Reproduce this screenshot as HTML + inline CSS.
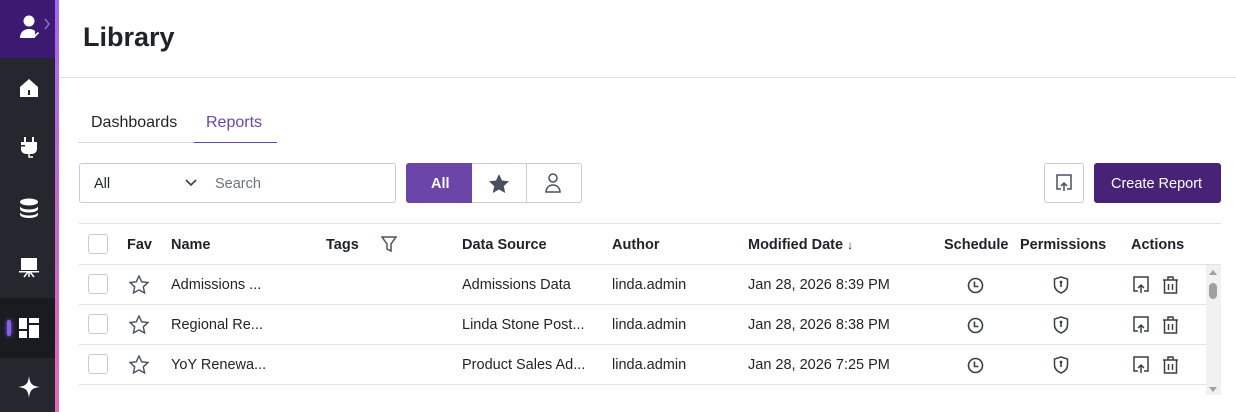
<!DOCTYPE html>
<html><head><style>
*{box-sizing:border-box;margin:0;padding:0}
body{width:1236px;height:412px;overflow:hidden;background:#fff;font-family:"Liberation Sans",sans-serif;position:relative;color:#1f2228}
.a{position:absolute}
.side{left:0;top:0;width:55px;height:412px;background:#25262e}
.stripe{left:55px;top:0;width:4px;height:412px;background:linear-gradient(#a468f0,#e766b8)}
.t{font-size:14.5px;white-space:nowrap}
.h{font-size:14.5px;font-weight:bold;white-space:nowrap}
.cb{width:20px;height:20px;border:1px solid #c9ccd3;border-radius:3px;background:#fff}
.line{height:1px;background:#e1e2e8}
</style></head><body>
<div class="a side"></div>
<div class="a" style="left:0;top:0;width:55px;height:58px;background:#3d1a72"></div>
<div class="a" style="left:0;top:298px;width:55px;height:60px;background:#1a1b20"></div>
<div class="a stripe"></div>
<svg class="a" style="left:18px;top:14px" width="36" height="26" viewBox="0 0 36 26"><circle cx="11" cy="7" r="5.5" fill="#fff"/><path d="M2 24c0-6 4-9 9-9 3 0 5 1 6 2v7z" fill="#fff"/><path d="M14 20l2.5 2.5 4-4" stroke="#fff" stroke-width="1.6" fill="none"/><path d="M27 5l4 5-4 5" stroke="#8b6fb5" stroke-width="1.5" fill="none"/></svg>
<svg class="a" style="left:19px;top:78px" width="20" height="20" viewBox="0 0 20 20"><path d="M1 9L10 1l9 8v10H1z" fill="#fff"/><rect x="9" y="12" width="2" height="5" fill="#25262e"/></svg>
<svg class="a" style="left:20px;top:137px" width="18" height="22" viewBox="0 0 18 22"><rect x="4" y="0" width="2" height="5" fill="#fff"/><rect x="12" y="0" width="2" height="5" fill="#fff"/><path d="M1 5h16v7a5 5 0 0 1-5 5H6a5 5 0 0 1-5-5z" fill="#fff"/><path d="M9 17v3h4" stroke="#fff" stroke-width="1.5" fill="none"/><rect x="0" y="8" width="5" height="1.5" fill="#25262e"/></svg>
<svg class="a" style="left:19px;top:198px" width="20" height="20" viewBox="0 0 20 20"><ellipse cx="10" cy="4" rx="9" ry="3.5" fill="#fff"/><path d="M1 8c0 2 4 3.5 9 3.5s9-1.5 9-3.5v3c0 2-4 3.5-9 3.5S1 13 1 11z" fill="#fff"/><path d="M1 14c0 2 4 3.5 9 3.5s9-1.5 9-3.5v2.5c0 2-4 3.5-9 3.5s-9-1.5-9-3.5z" fill="#fff"/></svg>
<svg class="a" style="left:19px;top:258px" width="20" height="20" viewBox="0 0 20 20"><rect x="2" y="0" width="16" height="12" fill="#fff"/><rect x="0" y="13" width="20" height="1.5" fill="#fff"/><path d="M5 19l4-5M15 19l-4-5M10 14v5" stroke="#fff" stroke-width="1.5"/></svg>
<div class="a" style="left:7px;top:320px;width:4px;height:16px;background:#8a5cf0;border-radius:2px;box-shadow:0 0 4px #8a5cf0"></div>
<svg class="a" style="left:19px;top:318px" width="20" height="20" viewBox="0 0 20 20"><rect x="0" y="0" width="8" height="11" fill="#fff"/><rect x="10" y="0" width="10" height="5" fill="#fff"/><rect x="0" y="13" width="8" height="7" fill="#fff"/><rect x="10" y="7" width="10" height="13" fill="#fff"/></svg>
<svg class="a" style="left:18px;top:376px" width="22" height="22" viewBox="0 0 22 22"><path d="M11 0C12 8 14 10 22 11 14 12 12 14 11 22 10 14 8 12 0 11 8 10 10 8 11 0z" fill="#fff"/></svg>
<div class="a" style="left:83px;top:22px;font-size:27px;font-weight:bold;color:#1f2228">Library</div>
<div class="a line" style="left:59px;top:77px;width:1177px"></div>
<div class="a t" style="left:91px;top:114px;font-size:16px">Dashboards</div>
<div class="a t" style="left:206px;top:114px;font-size:16px;color:#6b46a8">Reports</div>
<div class="a" style="left:78px;top:142px;width:116px;height:1px;background:#d5d6dc"></div>
<div class="a" style="left:194px;top:142px;width:83px;height:1px;background:#6b46a8"></div>
<div class="a" style="left:79px;top:163px;width:317px;height:40px;border:1px solid #c9ccd3;border-radius:3px"></div>
<div class="a t" style="left:94px;top:176px">All</div>
<svg class="a" style="left:184px;top:178px" width="14" height="10" viewBox="0 0 14 10"><path d="M2 2l5 5 5-5" stroke="#3a3f4a" stroke-width="1.6" fill="none"/></svg>
<div class="a t" style="left:215px;top:176px;color:#6b7280">Search</div>
<div class="a" style="left:406px;top:163px;width:176px;height:40px;border:1px solid #c9ccd3;border-radius:3px"></div>
<div class="a" style="left:406px;top:163px;width:66px;height:40px;background:#6b46a8;border-radius:3px 0 0 3px"></div>
<div class="a t" style="left:431px;top:176px;color:#fff;font-weight:bold">All</div>
<div class="a" style="left:526px;top:164px;width:1px;height:38px;background:#c9ccd3"></div>
<svg class="a" style="left:489px;top:174px" width="20" height="19" viewBox="0 0 20 19"><path d="M10 0l3 6.5 7 .8-5.2 4.8 1.4 6.9L10 15.5 3.8 19l1.4-6.9L0 7.3l7-.8z" fill="#4a5060"/></svg>
<svg class="a" style="left:545px;top:173px" width="16" height="20" viewBox="0 0 16 20"><circle cx="8" cy="5" r="4" stroke="#4a5060" stroke-width="1.5" fill="none"/><path d="M1 19c0-4 3-7 7-7s7 3 7 7z" stroke="#4a5060" stroke-width="1.5" fill="none"/></svg>
<div class="a" style="left:1044px;top:163px;width:40px;height:40px;border:1px solid #c9ccd3;border-radius:3px"></div>
<svg class="a" style="left:1056px;top:174px" width="16" height="18" viewBox="0 0 16 18"><path d="M5 15H1V1h14v14h-4" stroke="#4a5060" stroke-width="1.5" fill="none"/><path d="M8 17V9M5 12l3-3 3 3" stroke="#4a5060" stroke-width="1.5" fill="none"/></svg>
<div class="a" style="left:1094px;top:163px;width:127px;height:40px;background:#472276;border-radius:3px"></div>
<div class="a t" style="left:1111px;top:176px;color:#fff">Create Report</div>
<div class="a line" style="left:79px;top:223px;width:1142px"></div>
<div class="a line" style="left:79px;top:264px;width:1142px"></div>
<div class="a line" style="left:79px;top:304px;width:1127px"></div>
<div class="a line" style="left:79px;top:344px;width:1127px"></div>
<div class="a line" style="left:79px;top:384px;width:1127px"></div>
<div class="a cb" style="left:88px;top:234px"></div>
<div class="a h" style="left:127px;top:237px">Fav</div>
<div class="a h" style="left:171px;top:237px">Name</div>
<div class="a h" style="left:326px;top:237px">Tags</div>
<svg class="a" style="left:381px;top:236px" width="16" height="17" viewBox="0 0 16 17"><path d="M1 1h14l-5 7v7l-4-2V8z" stroke="#4a5060" stroke-width="1.5" fill="none"/></svg>
<div class="a h" style="left:462px;top:237px">Data Source</div>
<div class="a h" style="left:612px;top:237px">Author</div>
<div class="a h" style="left:748px;top:237px">Modified Date <span style="font-weight:normal;font-size:12px">↓</span></div>
<div class="a h" style="left:944px;top:237px">Schedule</div>
<div class="a h" style="left:1020px;top:237px">Permissions</div>
<div class="a h" style="left:1131px;top:237px">Actions</div>
<div class="a" style="left:1206px;top:265px;width:15px;height:130px;background:#f1f1f1"></div>
<svg class="a" style="left:1207px;top:268px" width="12" height="8"><path d="M2 7l4-5 4 5z" fill="#a0a0a0"/></svg>
<div class="a" style="left:1209px;top:283px;width:8px;height:16px;background:#a0a0a0;border-radius:4px"></div>
<svg class="a" style="left:1207px;top:386px" width="12" height="8"><path d="M2 1l4 5 4-5z" fill="#a0a0a0"/></svg>
<div id="rows"></div>
<script>
var d=[["Admissions ...","Admissions Data","Jan 28, 2026 8:39 PM"],["Regional Re...","Linda Stone Post...","Jan 28, 2026 8:38 PM"],["YoY Renewa...","Product Sales Ad...","Jan 28, 2026 7:25 PM"]];
var h="";
d.forEach(function(r,i){var y=264+i*40;
h+='<div class="a cb" style="left:88px;top:'+(y+10)+'px"></div>';
h+='<svg class="a" style="left:129px;top:'+(y+11)+'px" width="20" height="19" viewBox="0 0 20 19"><path d="M10 1l2.7 5.8 6.3.7-4.7 4.3 1.3 6.2L10 14.9 4.4 18l1.3-6.2L1 7.5l6.3-.7z" stroke="#4a5060" stroke-width="1.4" fill="none"/></svg>';
h+='<div class="a t" style="left:171px;top:'+(y+13)+'px">'+r[0]+'</div>';
h+='<div class="a t" style="left:462px;top:'+(y+13)+'px">'+r[1]+'</div>';
h+='<div class="a t" style="left:612px;top:'+(y+13)+'px">linda.admin</div>';
h+='<div class="a t" style="left:748px;top:'+(y+13)+'px">'+r[2]+'</div>';
h+='<svg class="a" style="left:967px;top:'+(y+13)+'px" width="17" height="17" viewBox="0 0 17 17"><circle cx="8.5" cy="8.5" r="7" stroke="#3a3f4a" stroke-width="1.6" fill="none"/><path d="M7.5 4.5v5h4" stroke="#3a3f4a" stroke-width="1.6" fill="none"/></svg>';
h+='<svg class="a" style="left:1053px;top:'+(y+12)+'px" width="16" height="18" viewBox="0 0 16 18"><path d="M8 1l6.5 2v6c0 4-3 6.5-6.5 8C4.5 15.5 1.5 13 1.5 9V3z" stroke="#3a3f4a" stroke-width="1.5" fill="none"/><path d="M8 6v5" stroke="#3a3f4a" stroke-width="1.6"/><circle cx="8" cy="6" r="1.4" fill="#3a3f4a"/></svg>';
h+='<svg class="a" style="left:1133px;top:'+(y+12)+'px" width="16" height="18" viewBox="0 0 16 18"><path d="M5 15H1V1h14v14h-4" stroke="#3a3f4a" stroke-width="1.5" fill="none"/><path d="M8 17V9M5 12l3-3 3 3" stroke="#3a3f4a" stroke-width="1.5" fill="none"/></svg>';
h+='<svg class="a" style="left:1162px;top:'+(y+12)+'px" width="17" height="18" viewBox="0 0 17 18"><path d="M1 4h15M6 4V1h5v3M2.5 4v13h12V4M6.5 8v6M10.5 8v6" stroke="#3a3f4a" stroke-width="1.5" fill="none"/></svg>';
});
document.getElementById("rows").innerHTML=h;
</script>
</body></html>
